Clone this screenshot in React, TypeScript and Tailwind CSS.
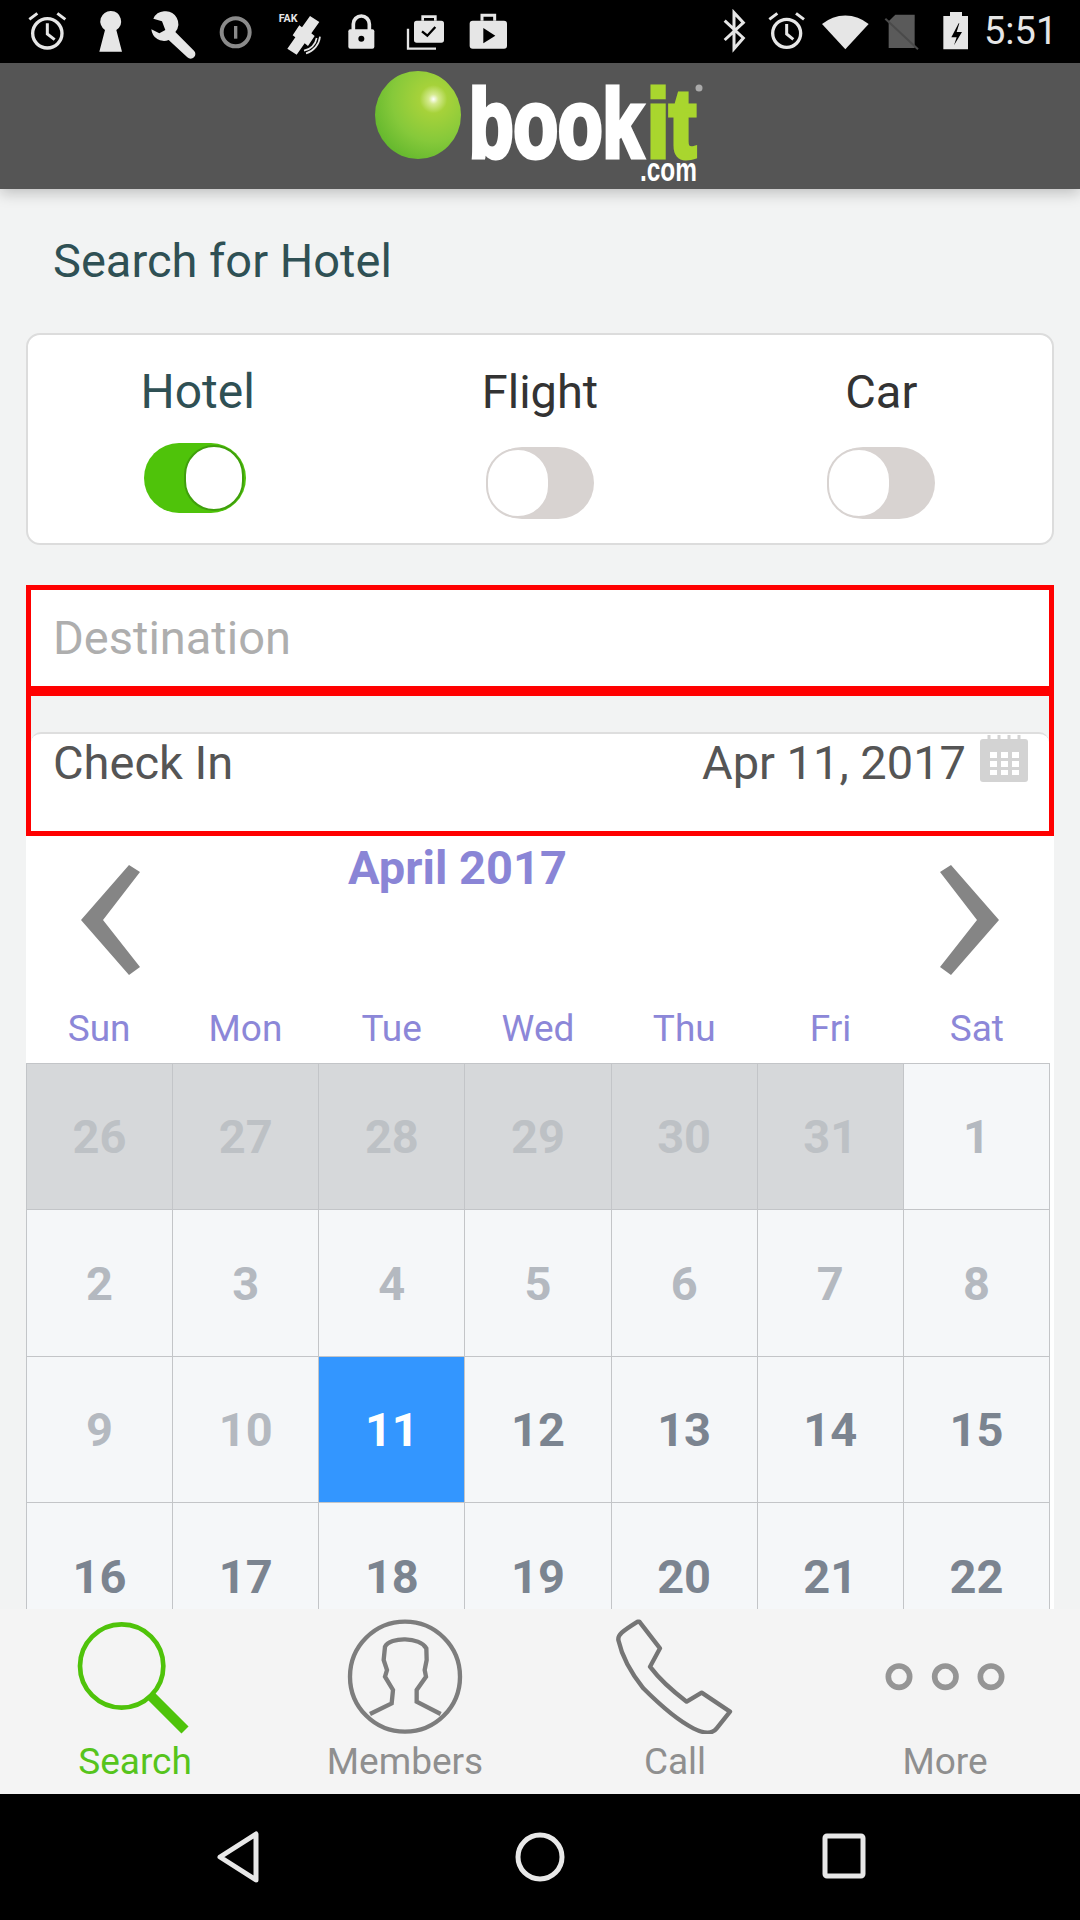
const DAYS = ['Sun', 'Mon', 'Tue', 'Wed', 'Thu', 'Fri', 'Sat'];

type Cell = { label: number; kind: 'prev' | 'past' | 'selected' | 'open' };

const CELLS: Cell[] = [
  ...[26, 27, 28, 29, 30, 31].map((label): Cell => ({ label, kind: 'prev' })),
  ...[1, 2, 3, 4, 5, 6, 7, 8, 9, 10].map((label): Cell => ({ label, kind: 'past' })),
  { label: 11, kind: 'selected' },
  ...[12, 13, 14, 15, 16, 17, 18, 19, 20, 21, 22].map((label): Cell => ({ label, kind: 'open' })),
];

function StatusLeft() {
  return (
    <svg width="520" height="63" viewBox="0 0 1560 189" fill="#e6e6e6">
      {/* alarm */}
      <circle cx="142" cy="100" r="44" fill="none" stroke="#e6e6e6" strokeWidth="10" />
      <path d="M142 70v32l22 17M88 58l24-18M196 58l-24-18" fill="none" stroke="#e6e6e6" strokeWidth="9" />
      {/* keyhole */}
      <path d="M333 33a31 31 0 0 1 16 57l17 65h-68l17-65a31 31 0 0 1 18-57z" />
      {/* wrench */}
      <path d="M492 34a38 38 0 0 0-32 22l26 8 10 26-18 10-24-12a38 38 0 0 0 52 32l56 52a14 14 0 0 0 20-20l-56-56a38 38 0 0 0-34-62z" />
      {/* sync */}
      <circle cx="707" cy="97" r="42" fill="none" stroke="#8a8a8a" strokeWidth="12" />
      <path d="M707 78v38" stroke="#8a8a8a" strokeWidth="10" />
      {/* fake gps */}
      <text x="836" y="66" fontFamily="Roboto, sans-serif" fontWeight="700" fontSize="32">FAK</text>
      <path d="M930 48l28 18-24 34 10 8-20 30-10-8-24 34-28-18 24-34-8-6 20-30 8 6z" />
      <path d="M912 152a46 46 0 0 0 38-38M918 160a58 58 0 0 0 42-50" fill="none" stroke="#e6e6e6" strokeWidth="5" />
      {/* lock */}
      <path d="M1060 92V72a24 24 0 0 1 48 0v20" fill="none" stroke="#e6e6e6" strokeWidth="11" />
      <rect x="1045" y="88" width="78" height="58" rx="6" />
      <circle cx="1084" cy="116" r="9" fill="#000" />
      {/* work bag */}
      <path d="M1268 62V50h38v12" fill="none" stroke="#e6e6e6" strokeWidth="8" />
      <rect x="1242" y="62" width="90" height="66" rx="8" />
      <path d="M1266 94l16 13 24-26" fill="none" stroke="#000" strokeWidth="7" />
      <path d="M1224 86v60h84" fill="none" stroke="#e6e6e6" strokeWidth="7" />
      {/* store bag */}
      <path d="M1446 62V46h38v16" fill="none" stroke="#e6e6e6" strokeWidth="9" />
      <rect x="1409" y="62" width="112" height="84" rx="9" />
      <path d="M1450 84l36 23-36 23z" fill="#000" />
    </svg>
  );
}

function StatusRight() {
  return (
    <svg width="280" height="63" viewBox="0 0 840 189" fill="#e6e6e6">
      <path d="M74 62l56 52-28 32V38l28 30-56 52" fill="none" stroke="#e6e6e6" strokeWidth="9" />
      <circle cx="260" cy="100" r="42" fill="none" stroke="#e6e6e6" strokeWidth="10" />
      <path d="M260 72v30l20 16M208 58l24-18M312 58l-24-18" fill="none" stroke="#e6e6e6" strokeWidth="9" />
      <path d="M366 72a108 108 0 0 1 140 0l-70 76z" />
      <path d="M586 44h58v100h-78V64z" fill="#5a5a5a" />
      <path d="M556 56l98 92" stroke="#4a4a4a" strokeWidth="6" />
      <path d="M750 36h36v12h18v100h-74V48h20z" />
      <path d="M776 70l-22 42h16l-8 24 24-40h-16l8-26z" fill="#000" />
    </svg>
  );
}

function Logo() {
  return (
    <svg width="400" height="126" viewBox="340 63 400 126">
      <defs>
        <radialGradient id="ball" cx="0.68" cy="0.32" r="0.8">
          <stop offset="0" stopColor="#ffffff" />
          <stop offset="0.07" stopColor="#d5ea8f" />
          <stop offset="0.2" stopColor="#a6d23a" />
          <stop offset="0.6" stopColor="#86c93a" />
          <stop offset="1" stopColor="#5fb52c" />
        </radialGradient>
      </defs>
      <ellipse cx="418" cy="115" rx="43" ry="44" fill="url(#ball)" />
      <text
        x="469"
        y="157"
        fontFamily="'Liberation Sans', sans-serif"
        fontWeight="700"
        fontSize="96"
        fill="#fff"
        stroke="#fff"
        strokeWidth="5"
        textLength="174"
        lengthAdjust="spacingAndGlyphs"
      >
        book
      </text>
      <text
        x="647"
        y="157"
        fontFamily="'Liberation Sans', sans-serif"
        fontWeight="700"
        fontSize="96"
        fill="#a9d62e"
        stroke="#a9d62e"
        strokeWidth="5"
        textLength="49"
        lengthAdjust="spacingAndGlyphs"
      >
        it
      </text>
      <text
        x="640"
        y="181"
        fontFamily="'Liberation Sans', sans-serif"
        fontWeight="700"
        fontSize="34"
        fill="#fff"
        textLength="57"
        lengthAdjust="spacingAndGlyphs"
      >
        .com
      </text>
      <circle cx="699" cy="88" r="3.5" fill="#aaa" />
    </svg>
  );
}

function Toggle({ on }: { on?: boolean }) {
  if (on) {
    return (
      <div className="mr-[8px] mt-[26px] flex h-[70px] w-[102px] items-center justify-end rounded-full bg-[#4fc30a] pr-[2px]">
        <div className="h-[66px] w-[60px] rounded-full border-2 border-[#3f9f0c] bg-white" />
      </div>
    );
  }
  return (
    <div className="mt-[30px] flex h-[72px] w-[108px] items-center rounded-full bg-[#d8d3d1]">
      <div className="h-[70px] w-[64px] rounded-full border-2 border-[#d8d3d1] bg-white" />
    </div>
  );
}

function Chevron({ flip }: { flip?: boolean }) {
  return (
    <svg width="60" height="110" viewBox="0 0 60 110" className="mt-[29px] shrink-0">
      <path
        d={flip ? 'M11 0L0 7l37 48-37 47 11 8L59 55z' : 'M49 0L60 7 23 55l37 47-11 8L1 55z'}
        fill="#858585"
      />
    </svg>
  );
}

function SearchIcon() {
  return (
    <svg width="270" height="125" viewBox="-150 -3 810 375" fill="none">
      <circle cx="215" cy="168" r="125" stroke="#4fc30a" strokeWidth="14" />
      <path d="M300 255l105 105" stroke="#4fc30a" strokeWidth="30" />
    </svg>
  );
}

function MembersIcon() {
  return (
    <svg width="270" height="125" viewBox="660 -3 810 375" fill="none" stroke="#7d7d7d" strokeWidth="13">
      <circle cx="1065" cy="200" r="165" />
      <path d="M960 312l65-32 4-40-24-40 6-20-10-30 4-40c16-30 104-30 124 5l1 35-6 30 4 20-28 40v35l72 37" />
    </svg>
  );
}

function CallIcon() {
  return (
    <svg width="270" height="125" viewBox="-120 -3 810 375" fill="none" stroke="#757575" strokeWidth="13" strokeLinejoin="round">
      <path d="M178 35l62 80-30 55c30 40 70 75 110 105l45-27 85 57-40 50c-15 20-40 15-70 0-50-25-100-70-150-120-40-50-65-100-75-145-2-15 10-25 58-55z" />
    </svg>
  );
}

function MoreIcon() {
  return (
    <svg width="270" height="125" viewBox="690 -3 810 375" fill="none" stroke="#959595" strokeWidth="17">
      <circle cx="957" cy="200" r="32" />
      <circle cx="1096" cy="200" r="32" />
      <circle cx="1233" cy="200" r="32" />
    </svg>
  );
}

function CalendarIcon() {
  return (
    <svg width="48" height="47" viewBox="0 0 48 47" className="-mt-[3px] shrink-0">
      <rect x="0" y="4" width="48" height="43" rx="3" fill="#d3d3d3" />
      <path d="M9 0v6M19 0v6M29 0v6M39 0v6" stroke="#d3d3d3" strokeWidth="3" />
      <path
        d="M10 17h7v6h-7zM21 17h7v6h-7zM32 17h7v6h-7zM10 26h7v6h-7zM21 26h7v6h-7zM32 26h7v6h-7zM10 35h7v5h-7zM21 35h7v5h-7zM32 35h7v5h-7z"
        fill="#fff"
      />
    </svg>
  );
}

const cellStyle: Record<Cell['kind'], string> = {
  prev: 'bg-[#d6d8da] text-[#bdc1c5]',
  past: 'bg-[#f5f7f9] text-[#b4b9c0]',
  selected: 'bg-[#3396ff] text-white',
  open: 'bg-[#f5f7f9] text-[#7b8490]',
};

export default function App() {
  return (
    <div className="flex h-[1920px] w-[1080px] flex-col overflow-hidden bg-black font-[Roboto,sans-serif]">
      {/* Status bar */}
      <div className="flex h-[63px] shrink-0 items-center">
        <StatusLeft />
        <div className="ml-[180px]">
          <StatusRight />
        </div>
        <span className="ml-[4px] text-[38px] leading-[63px] text-[#e6e6e6]">5:51</span>
      </div>

      {/* Header */}
      <div className="relative z-10 flex h-[126px] shrink-0 justify-center bg-[#555555] shadow-[0_4px_14px_rgba(0,0,0,0.22)]">
        <Logo />
      </div>

      {/* Content */}
      <div className="flex min-h-0 flex-1 flex-col bg-[#f2f3f3]">
        <div className="h-[144px] shrink-0 pl-[53px] pt-[48px] text-[47px] leading-[48px] text-[#2f5054]">
          Search for Hotel
        </div>

        <div className="mx-[26px] grid h-[212px] shrink-0 grid-cols-3 rounded-[14px] border-2 border-[#dcdcdc] bg-white pt-[32px]">
          <div className="flex flex-col items-center">
            <span className="mr-[2px] text-[48px] leading-[50px] text-[#2f5054]">Hotel</span>
            <Toggle on />
          </div>
          <div className="flex flex-col items-center">
            <span className="text-[47px] leading-[50px] text-[#333333]">Flight</span>
            <Toggle />
          </div>
          <div className="flex flex-col items-center">
            <span className="text-[47px] leading-[50px] text-[#333333]">Car</span>
            <Toggle />
          </div>
        </div>

        <div className="mx-[26px] mt-[40px] flex h-[106px] shrink-0 items-center border-[5px] border-[#ff0000] bg-white pl-[22px] text-[47px] text-[#aeaeae]">
          Destination
        </div>

        <div className="mx-[26px] h-[145px] shrink-0 border-[5px] border-[#ff0000] pt-[36px]">
          <div className="flex h-full justify-between rounded-t-[10px] border-t-2 border-[#dedede] bg-white pl-[22px] pr-[21px] pt-[4px] text-[47px] leading-[50px] text-[#555555]">
            <span>Check In</span>
            <div className="flex items-start gap-[14px]">
              <span>Apr 11, 2017</span>
              <CalendarIcon />
            </div>
          </div>
        </div>

        {/* Calendar */}
        <div className="mx-[26px] min-h-0 flex-1 overflow-hidden bg-white">
          <div className="flex h-[170px] items-start px-[54px]">
            <Chevron />
            <span className="ml-[208px] text-[47px] font-bold leading-[64px] text-[#8a85d6]">April 2017</span>
            <div className="ml-auto">
              <Chevron flip />
            </div>
          </div>
          <div className="grid h-[57px] w-[1024px] grid-cols-7 text-center text-[37px] leading-[46px] text-[#8c87d8]">
            {DAYS.map((d) => (
              <span key={d}>{d}</span>
            ))}
          </div>
          <div className="grid w-[1024px] grid-cols-7 border-r border-[#c3c5c8]">
            {CELLS.map((c) => (
              <div
                key={c.label}
                className={`flex h-[146.4px] items-center justify-center border-l border-t border-[#c3c5c8] pt-[2px] text-[47px] font-bold ${cellStyle[c.kind]}`}
              >
                {c.label}
              </div>
            ))}
          </div>
        </div>
      </div>

      {/* Bottom tabs */}
      <div className="grid h-[185px] shrink-0 grid-cols-4 bg-[#f4f4f4] text-center text-[37px] leading-[44px] text-[#8f8f8f]">
        <div className="flex flex-col items-center">
          <SearchIcon />
          <span className="mt-[6px] text-[#56c41c]">Search</span>
        </div>
        <div className="flex flex-col items-center">
          <MembersIcon />
          <span className="mt-[6px]">Members</span>
        </div>
        <div className="flex flex-col items-center">
          <CallIcon />
          <span className="mt-[6px]">Call</span>
        </div>
        <div className="flex flex-col items-center">
          <MoreIcon />
          <span className="mt-[6px]">More</span>
        </div>
      </div>

      {/* Android nav */}
      <div className="flex h-[126px] shrink-0 items-center justify-center gap-[240px]">
        <svg width="60" height="60" viewBox="0 0 60 60" fill="none" stroke="#e8e8e8" strokeWidth="5" strokeLinejoin="round">
          <path d="M46 7v46L10 30z" />
        </svg>
        <svg width="60" height="60" viewBox="0 0 60 60" fill="none" stroke="#e8e8e8" strokeWidth="5">
          <circle cx="30" cy="30" r="22" />
        </svg>
        <svg width="60" height="60" viewBox="0 0 60 60" fill="none" stroke="#e8e8e8" strokeWidth="5" strokeLinejoin="round">
          <rect x="15" y="9" width="38" height="40" rx="2" />
        </svg>
      </div>
    </div>
  );
}
